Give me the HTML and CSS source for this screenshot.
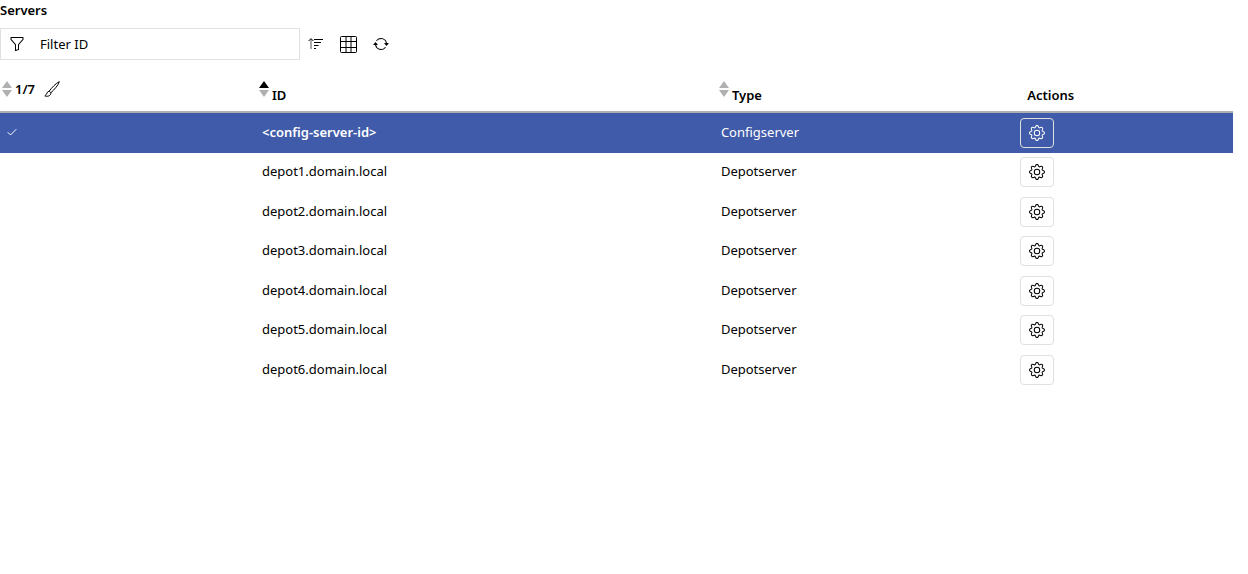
FILE: index.html
```html
<!DOCTYPE html>
<html lang="en">
<head>
<meta charset="utf-8">
<title>Servers</title>
<link rel="stylesheet" href="styles.css">
</head>
<body>
<svg class="sprite" aria-hidden="true">
  <symbol id="gear" viewBox="0 0 16 16"><path d="M8 4.754a3.246 3.246 0 1 0 0 6.492 3.246 3.246 0 0 0 0-6.492zM5.754 8a2.246 2.246 0 1 1 4.492 0 2.246 2.246 0 0 1-4.492 0z"/><path d="M9.796 1.343c-.527-1.79-3.065-1.79-3.592 0l-.094.319a.873.873 0 0 1-1.255.52l-.292-.16c-1.64-.892-3.433.902-2.54 2.541l.159.292a.873.873 0 0 1-.52 1.255l-.319.094c-1.79.527-1.79 3.065 0 3.592l.319.094a.873.873 0 0 1 .52 1.255l-.16.292c-.892 1.64.901 3.434 2.541 2.54l.292-.159a.873.873 0 0 1 1.255.52l.094.319c.527 1.79 3.065 1.79 3.592 0l.094-.319a.873.873 0 0 1 1.255-.52l.292.16c1.64.893 3.434-.902 2.54-2.541l-.159-.292a.873.873 0 0 1 .52-1.255l.319-.094c1.79-.527 1.79-3.065 0-3.592l-.319-.094a.873.873 0 0 1-.52-1.255l.16-.292c.893-1.64-.902-3.433-2.541-2.54l-.292.159a.873.873 0 0 1-1.255-.52l-.094-.319zm-2.633.283c.246-.835 1.428-.835 1.674 0l.094.319a1.873 1.873 0 0 0 2.693 1.115l.291-.16c.764-.415 1.6.42 1.184 1.185l-.159.292a1.873 1.873 0 0 0 1.116 2.692l.318.094c.835.246.835 1.428 0 1.674l-.319.094a1.873 1.873 0 0 0-1.115 2.693l.16.291c.415.764-.42 1.6-1.185 1.184l-.291-.159a1.873 1.873 0 0 0-2.693 1.116l-.094.318c-.246.835-1.428.835-1.674 0l-.094-.319a1.873 1.873 0 0 0-2.692-1.115l-.292.16c-.764.415-1.6-.42-1.184-1.185l.159-.291A1.873 1.873 0 0 0 1.945 8.93l-.319-.094c-.835-.246-.835-1.428 0-1.674l.319-.094A1.873 1.873 0 0 0 3.06 4.377l-.16-.292c-.415-.764.42-1.6 1.185-1.184l.292.159a1.873 1.873 0 0 0 2.692-1.115l.094-.319z"/></symbol>
  <symbol id="sort" viewBox="0 0 10 16"><path class="up" d="M5 0l5 7H0z"/><path class="down" d="M5 16l5-7H0z"/></symbol>
</svg>
<main class="panel">
  <h1 class="title">Servers</h1>
  <div class="toolbar">
    <label class="filter">
      <svg class="icon" viewBox="0 0 16 16" aria-hidden="true"><path d="M1.5 1.5A.5.5 0 0 1 2 1h12a.5.5 0 0 1 .5.5v2a.5.5 0 0 1-.128.334L10 8.692V13.5a.5.5 0 0 1-.342.474l-3 1A.5.5 0 0 1 6 14.5V8.692L1.628 3.834A.5.5 0 0 1 1.5 3.5v-2zm1 .5v1.308l4.372 4.858A.5.5 0 0 1 7 8.5v5.306l2-.666V8.5a.5.5 0 0 1 .128-.334L13.5 3.308V2h-11z"/></svg>
      <input class="filter-input" type="text" placeholder="Filter ID" aria-label="Filter ID">
    </label>
    <button class="tool" type="button" aria-label="Sort"><svg class="icon" viewBox="0 0 16 16" aria-hidden="true"><path class="line shaft" d="M3 13V3"/><path class="line" d="M.6 5L3 2.600 5.400 5M6 3.500h9M6 6.500h7M6 9.500h4.500M6 12.500h2"/></svg></button>
    <button class="tool" type="button" aria-label="Columns"><svg class="icon wide" viewBox="0 0 17 17" aria-hidden="true"><rect class="line" x=".5" y=".5" width="16" height="16" rx="1"/><path class="line" d="M0 5.5h17M0 11.5h17M6 0v17M11 0v17"/></svg></button>
    <button class="tool" type="button" aria-label="Refresh"><svg class="icon" viewBox="0 0 16 16" aria-hidden="true"><path d="M11.534 7h3.932a.25.25 0 0 1 .192.41l-1.966 2.36a.25.25 0 0 1-.384 0l-1.966-2.36a.25.25 0 0 1 .192-.41zm-11 2h3.932a.25.25 0 0 0 .192-.41L2.692 6.23a.25.25 0 0 0-.384 0L.342 8.59A.25.25 0 0 0 .534 9z"/><path d="M8 3c-1.552 0-2.94.707-3.857 1.818a.5.5 0 1 1-.771-.636A6.002 6.002 0 0 1 13.917 7H12.9A5.002 5.002 0 0 0 8 3zM3.1 9a5.002 5.002 0 0 0 8.757 2.182.5.5 0 1 1 .771.636A6.002 6.002 0 0 1 2.083 9H3.1z"/></svg></button>
  </div>
  <table class="servers">
    <colgroup><col class="col-mark"><col class="col-id"><col class="col-type"><col></colgroup>
    <thead>
      <tr>
        <th scope="col"><div class="head mark"><svg class="sort" aria-hidden="true"><use href="#sort"/></svg><span>1/7</span><button class="tool brush" type="button" aria-label="Clear selection"><svg class="icon" viewBox="0 0 16 16" aria-hidden="true"><path class="line" d="M15.3.7C12 2.2 7.500 6.800 5.200 10.200l1.700 1.500C10.500 8.500 14.300 4 15.300.7zM5.200 10.200c-2.300 0-2 3.200-4.400 4.700 2.700.9 6.100.2 6.100-3.200"/></svg></button></div></th>
        <th scope="col"><div class="head"><svg class="sort asc" aria-hidden="true"><use href="#sort"/></svg><span class="name">ID</span></div></th>
        <th scope="col"><div class="head"><svg class="sort" aria-hidden="true"><use href="#sort"/></svg><span class="name">Type</span></div></th>
        <th scope="col"><div class="head last"><span class="name">Actions</span></div></th>
      </tr>
    </thead>
    <tbody>
      <tr class="selected"><td><svg class="check" viewBox="0 0 10 8" aria-label="Selected"><path class="line" d="M.7 4.200L3.500 7 9.300 1.200"/></svg></td><td><b>&lt;config-server-id&gt;</b></td><td>Configserver</td><td><button class="action" type="button" aria-label="Configure config server"><svg class="icon"><use href="#gear"/></svg></button></td></tr>
      <tr><td></td><td>depot1.domain.local</td><td>Depotserver</td><td><button class="action" type="button" aria-label="Configure depot1"><svg class="icon"><use href="#gear"/></svg></button></td></tr>
      <tr><td></td><td>depot2.domain.local</td><td>Depotserver</td><td><button class="action" type="button" aria-label="Configure depot2"><svg class="icon"><use href="#gear"/></svg></button></td></tr>
      <tr><td></td><td>depot3.domain.local</td><td>Depotserver</td><td><button class="action" type="button" aria-label="Configure depot3"><svg class="icon"><use href="#gear"/></svg></button></td></tr>
      <tr><td></td><td>depot4.domain.local</td><td>Depotserver</td><td><button class="action" type="button" aria-label="Configure depot4"><svg class="icon"><use href="#gear"/></svg></button></td></tr>
      <tr><td></td><td>depot5.domain.local</td><td>Depotserver</td><td><button class="action" type="button" aria-label="Configure depot5"><svg class="icon"><use href="#gear"/></svg></button></td></tr>
      <tr><td></td><td>depot6.domain.local</td><td>Depotserver</td><td><button class="action" type="button" aria-label="Configure depot6"><svg class="icon"><use href="#gear"/></svg></button></td></tr>
    </tbody>
  </table>
</main>
</body>
</html>
```
FILE: styles.css
```css
* { box-sizing: border-box; }
body {
  margin: 0;
  background: #fff;
  color: #000;
  font: 13px/18px "Noto Sans", "Open Sans", sans-serif;
}
button, input { font: inherit; color: inherit; }
.sprite { position: absolute; width: 0; height: 0; }
.panel { padding-right: 15px; }
.title { margin: 0; padding: 1px 0 9px; font-size: 13px; font-weight: 600; }
.toolbar { display: flex; align-items: center; }
.filter {
  display: flex;
  align-items: center;
  gap: 13px;
  width: 300px;
  height: 32px;
  padding: 0 8px;
  border: 1px solid #e0e0e0;
}
.filter-input { flex: 1; min-width: 0; padding: 0 2px; border: 0; outline: 0; background: none; }
.filter-input::placeholder { color: #000; opacity: 1; }
.icon { display: block; flex: none; width: 16px; height: 16px; fill: currentColor; }
.wide { width: 17px; height: 17px; }
.line { fill: none; stroke: currentColor; stroke-width: 1; }
.shaft { stroke: #555; }
.tool { padding: 0 8px; border: 0; background: none; }
.brush { padding: 0 6px; }
.servers { width: 100%; margin-top: 12px; border-collapse: separate; border-spacing: 0; table-layout: fixed; }
.col-mark { width: 20.6%; }
.col-id { width: 37.3%; }
.col-type { width: 24.2%; }
th { padding: 0; border-bottom: 2px solid #b0b0b0; font-weight: 600; text-align: left; vertical-align: top; }
b { font-weight: 600; }
.head { display: flex; align-items: flex-start; gap: 3px; height: 39px; padding: 9px 5px 0; }
.mark { align-items: center; padding: 0 2px 5px; }
.last { padding-left: 15px; }
.name { padding-top: 5px; }
.sort { width: 10px; height: 16px; }
.up, .down { fill: #b0b0b0; }
.up { fill: var(--up, #b0b0b0); }
.asc { --up: #000; }
td { padding: 4px 8px 6px; vertical-align: middle; }
tbody tr:nth-child(even) td { padding: 3px 8px 6px; }
tbody tr td:first-child { padding-left: 7px; }
tbody tr td:nth-child(3) { padding-left: 7px; }
tbody tr td:last-child { padding-top: 5px; padding-bottom: 5px; }
tbody tr:nth-child(even) td:last-child { padding-top: 4px; }
.selected { background: #3f5ba9; color: #fff; }
.check { display: block; width: 10px; height: 8px; }
.action { display: block; padding: 6px 8px; border: 1px solid #e0e0e0; border-radius: 4px; background: none; }
```
